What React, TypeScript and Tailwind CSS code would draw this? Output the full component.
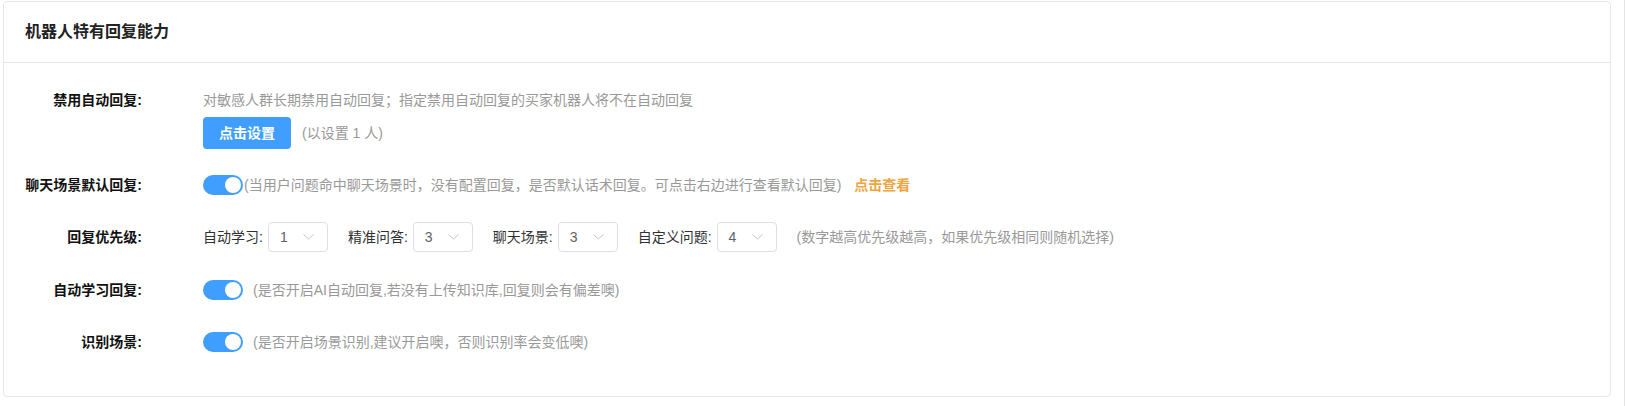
import { useState } from "react";

const font = { fontFamily: '"Liberation Sans", "Noto Sans CJK SC", sans-serif' };

function Toggle({ on, onChange }: { on: boolean; onChange: () => void }) {
  return (
    <button
      onClick={onChange}
      className={`relative w-[40px] h-[20px] rounded-full shrink-0 transition-colors ${
        on ? "bg-[#409eff]" : "bg-[#dcdfe6]"
      }`}
    >
      <span
        className={`absolute top-[2px] w-[16px] h-[16px] rounded-full bg-white transition-all ${
          on ? "left-[22px]" : "left-[2px]"
        }`}
      />
    </button>
  );
}

function Select({ value }: { value: string }) {
  return (
    <div className="w-[60px] h-[30px] border border-[#dcdfe6] rounded-[4px] flex items-center justify-between pl-[11px] pr-[13px] text-[14px] text-[#606266] bg-white">
      <span>{value}</span>
      <svg width="11" height="6" viewBox="0 0 11 6" fill="none">
        <path d="M0.5 0.5 L5.5 5 L10.5 0.5" stroke="#c0c4cc" strokeWidth="1" />
      </svg>
    </div>
  );
}

function Label({ children }: { children: string }) {
  return (
    <div className="w-[138px] shrink-0 text-right text-[14px] font-bold text-[#111] leading-[20px]">
      {children}
    </div>
  );
}

export default function App() {
  const [chatDefault, setChatDefault] = useState(true);
  const [autoLearn, setAutoLearn] = useState(true);
  const [scene, setScene] = useState(true);

  const priorities = [
    { label: "自动学习:", value: "1" },
    { label: "精准问答:", value: "3" },
    { label: "聊天场景:", value: "3" },
    { label: "自定义问题:", value: "4" },
  ];

  return (
    <div style={font} className="w-[1625px] h-[406px] bg-white border-r border-[#e4e4e4] pt-[1px] pl-[3px]">
      <div className="w-[1608px] border border-[#e4e7ed] rounded-[4px] bg-white">
        {/* Header */}
        <div className="h-[61px] flex items-center pl-[21px] border-b border-[#e4e7ed]">
          <h2 className="text-[16px] font-bold text-[#222]">机器人特有回复能力</h2>
        </div>

        <div className="pt-[27px] pb-[34px]">
          {/* 禁用自动回复 */}
          <div className="flex items-start">
            <Label>禁用自动回复:</Label>
            <div className="ml-[61px]">
              <p className="text-[14px] leading-[20px] text-[#999]">
                对敏感人群长期禁用自动回复；指定禁用自动回复的买家机器人将不在自动回复
              </p>
              <div className="flex items-center mt-[7px]">
                <button className="w-[88px] h-[32px] rounded-[4px] bg-[#409eff] text-white text-[14px] font-bold">
                  点击设置
                </button>
                <span className="ml-[11px] text-[14px] text-[#999]">(以设置 1 人)</span>
              </div>
            </div>
          </div>

          {/* 聊天场景默认回复 */}
          <div className="flex items-center h-[40px] mt-[16px]">
            <Label>聊天场景默认回复:</Label>
            <div className="ml-[61px] flex items-center">
              <Toggle on={chatDefault} onChange={() => setChatDefault(!chatDefault)} />
              <span className="ml-[1px] text-[14px] text-[#999]">
                (当用户问题命中聊天场景时，没有配置回复，是否默认话术回复。可点击右边进行查看默认回复)
              </span>
              <button className="ml-[13px] text-[14px] font-bold text-[#eda53e]">点击查看</button>
            </div>
          </div>

          {/* 回复优先级 */}
          <div className="flex items-center h-[40px] mt-[12px]">
            <Label>回复优先级:</Label>
            <div className="ml-[61px] flex items-center gap-[20px]">
              {priorities.map((p) => (
                <div key={p.label} className="flex items-center gap-[5px]">
                  <span className="text-[14px] text-[#303133]">{p.label}</span>
                  <Select value={p.value} />
                </div>
              ))}
              <span className="text-[14px] text-[#999]">
                (数字越高优先级越高，如果优先级相同则随机选择)
              </span>
            </div>
          </div>

          {/* 自动学习回复 */}
          <div className="flex items-center h-[40px] mt-[13px]">
            <Label>自动学习回复:</Label>
            <div className="ml-[61px] flex items-center gap-[10px]">
              <Toggle on={autoLearn} onChange={() => setAutoLearn(!autoLearn)} />
              <span className="text-[14px] text-[#999]">
                (是否开启AI自动回复,若没有上传知识库,回复则会有偏差噢)
              </span>
            </div>
          </div>

          {/* 识别场景 */}
          <div className="flex items-center h-[40px] mt-[12px]">
            <Label>识别场景:</Label>
            <div className="ml-[61px] flex items-center gap-[10px]">
              <Toggle on={scene} onChange={() => setScene(!scene)} />
              <span className="text-[14px] text-[#999]">
                (是否开启场景识别,建议开启噢，否则识别率会变低噢)
              </span>
            </div>
          </div>
        </div>
      </div>
    </div>
  );
}
